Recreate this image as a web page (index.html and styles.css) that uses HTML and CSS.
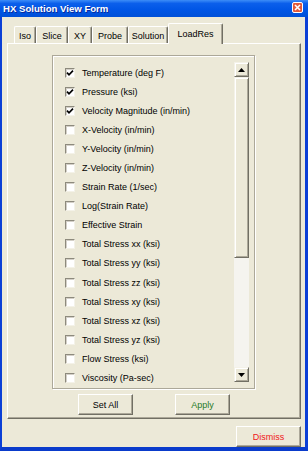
FILE: index.html
```html
<!DOCTYPE html>
<html>
<head>
<meta charset="utf-8">
<link rel="stylesheet" href="styles.css">
</head>
<body>
<div class="win">
  <div class="titlebar">
    <span class="title">HX Solution View Form</span>
    <svg class="close" width="11" height="11" viewBox="0 0 11 11">
      <rect x="0.5" y="0.5" width="10" height="10" rx="1.5" fill="#E2593A" stroke="#fff"/>
      <path d="M3 3 L8 8 M8 3 L3 8" stroke="#fff" stroke-width="1.6"/>
    </svg>
  </div>
  <div class="client">
    <div class="tabs">
      <div class="tab w-iso">Iso</div>
      <div class="tab w-slice">Slice</div>
      <div class="tab w-xy">XY</div>
      <div class="tab w-probe">Probe</div>
      <div class="tab w-sol">Solution</div>
      <div class="tab sel w-load">LoadRes</div>
    </div>
    <div class="panel">
      <div class="group">
        <div class="list">
          <div class="row"><span class="cb"><svg width="8" height="8" viewBox="0 0 8 8"><path d="M1 3.6 L3 5.8 L7 1.6" fill="none" stroke="#000" stroke-width="1.7"/></svg></span>Temperature (deg F)</div>
          <div class="row"><span class="cb"><svg width="8" height="8" viewBox="0 0 8 8"><path d="M1 3.6 L3 5.8 L7 1.6" fill="none" stroke="#000" stroke-width="1.7"/></svg></span>Pressure (ksi)</div>
          <div class="row"><span class="cb"><svg width="8" height="8" viewBox="0 0 8 8"><path d="M1 3.6 L3 5.8 L7 1.6" fill="none" stroke="#000" stroke-width="1.7"/></svg></span>Velocity Magnitude (in/min)</div>
          <div class="row"><span class="cb"></span>X-Velocity (in/min)</div>
          <div class="row"><span class="cb"></span>Y-Velocity (in/min)</div>
          <div class="row"><span class="cb"></span>Z-Velocity (in/min)</div>
          <div class="row"><span class="cb"></span>Strain Rate (1/sec)</div>
          <div class="row"><span class="cb"></span>Log(Strain Rate)</div>
          <div class="row"><span class="cb"></span>Effective Strain</div>
          <div class="row"><span class="cb"></span>Total Stress xx (ksi)</div>
          <div class="row"><span class="cb"></span>Total Stress yy (ksi)</div>
          <div class="row"><span class="cb"></span>Total Stress zz (ksi)</div>
          <div class="row"><span class="cb"></span>Total Stress xy (ksi)</div>
          <div class="row"><span class="cb"></span>Total Stress xz (ksi)</div>
          <div class="row"><span class="cb"></span>Total Stress yz (ksi)</div>
          <div class="row"><span class="cb"></span>Flow Stress (ksi)</div>
          <div class="row"><span class="cb"></span>Viscosity (Pa-sec)</div>
        </div>
        <div class="sb">
          <div class="sbbtn"><svg width="7" height="4" viewBox="0 0 7 4"><path d="M0 4 L3.5 0 L7 4 Z" fill="#000"/></svg></div>
          <div class="track"><div class="thumb"></div></div>
          <div class="sbbtn"><svg width="7" height="4" viewBox="0 0 7 4"><path d="M0 0 L3.5 4 L7 0 Z" fill="#000"/></svg></div>
        </div>
      </div>
      <div class="btnrow">
        <div class="btn">Set All</div>
        <div class="btn apply">Apply</div>
      </div>
    </div>
    <div class="footer">
      <div class="btn dismiss">Dismiss</div>
    </div>
  </div>
</div>
</body>
</html>
```
FILE: styles.css
```css
html, body {
  margin: 0;
  padding: 0;
  background: #ECE9D8;
}
.win {
  width: 308px;
  height: 451px;
  display: flex;
  flex-direction: column;
  font-family: "Liberation Sans", Arial, sans-serif;
  font-size: 9px;
  color: #000;
}
.titlebar {
  height: 17px;
  flex: none;
  display: flex;
  align-items: center;
  justify-content: space-between;
  background: linear-gradient(to bottom, #3D8DF7 0%, #0B5FEB 20%, #0055E5 60%, #0050D8 100%);
}
.title {
  padding-left: 3px;
  color: #fff;
  font-weight: bold;
  font-size: 9.6px;
  text-shadow: 1px 1px 0 #0A2A9A;
}
.close {
  margin-right: 5px;
  margin-top: -2px;
}
.client {
  flex: 1;
  background: #ECE9D8;
  border-left: 2px solid #0B3FD6;
  border-right: 3px solid #0B3FD6;
  border-bottom: 4px solid #0A3BCB;
  display: flex;
  flex-direction: column;
}
.tabs {
  margin-top: 6px;
  height: 20px;
  padding-left: 12px;
  display: flex;
  align-items: flex-end;
  position: relative;
  z-index: 2;
}
.tab {
  box-sizing: border-box;
  height: 17px;
  border-left: 1px solid #fff;
  border-top: 1px solid #fff;
  border-right: 1px solid #716F64;
  box-shadow: inset -1px 0 0 #ACA899;
  border-radius: 2px 2px 0 0;
  display: flex;
  align-items: center;
  justify-content: center;
  padding-top: 2px;
  background: #ECE9D8;
}
.tab.sel {
  height: 21px;
  margin-bottom: -1px;
  padding-top: 0;
}
.w-iso { width: 22px; }
.w-slice { width: 32px; }
.w-xy { width: 24px; }
.w-probe { width: 36px; }
.w-sol { width: 40px; }
.w-load { width: 55px; }
.panel {
  box-sizing: border-box;
  margin-left: 5px;
  width: 294px;
  height: 376px;
  border-left: 1px solid #fff;
  border-top: 1px solid #fff;
  border-right: 1px solid #716F64;
  border-bottom: 1px solid #716F64;
  box-shadow: inset -1px -1px 0 #ACA899;
  display: flex;
  flex-direction: column;
}
.group {
  box-sizing: border-box;
  margin-left: 44px;
  margin-top: 11px;
  width: 203px;
  height: 334px;
  border: 1px solid #ACA899;
  box-shadow: inset 1px 1px 0 #fff, 1px 1px 0 #fff;
  padding: 6px 5px 0 12px;
  display: flex;
}
.list {
  flex: 1;
  margin-top: 1px;
}
.row {
  height: 19.1px;
  display: flex;
  align-items: center;
  white-space: nowrap;
}
.cb {
  box-sizing: border-box;
  width: 10px;
  height: 10px;
  margin-right: 7px;
  background: #fff;
  border: 1px solid;
  border-color: #8D8A7D #F4F2E8 #F4F2E8 #8D8A7D;
  box-shadow: inset 1px 1px 0 #D4D0C8;
  display: flex;
  align-items: center;
  justify-content: center;
}
.cb svg {
  display: block;
}
.sb {
  width: 15px;
  height: 320px;
  display: flex;
  flex-direction: column;
  flex: none;
}
.sbbtn, .thumb {
  box-sizing: border-box;
  background: #ECE9D8;
  border-left: 1px solid #F4F2E8;
  border-top: 1px solid #F4F2E8;
  border-right: 1px solid #716F64;
  border-bottom: 1px solid #716F64;
  box-shadow: inset 1px 1px 0 #fff, inset -1px -1px 0 #ACA899;
}
.sbbtn {
  height: 15px;
  display: flex;
  align-items: center;
  justify-content: center;
}
.sbbtn svg {
  display: block;
}
.track {
  flex: 1;
  background: #F5F4EF;
}
.thumb {
  height: 181px;
}
.btnrow {
  display: flex;
  margin-top: 5px;
  padding-left: 70px;
  gap: 42px;
}
.btn {
  box-sizing: border-box;
  width: 55px;
  height: 21px;
  background: #ECE9D8;
  border-left: 1px solid #fff;
  border-top: 1px solid #fff;
  border-right: 1px solid #716F64;
  border-bottom: 1px solid #716F64;
  box-shadow: inset -1px -1px 0 #ACA899;
  display: flex;
  align-items: center;
  justify-content: center;
}
.apply {
  color: #1F7A1F;
}
.footer {
  display: flex;
  justify-content: flex-end;
  margin-top: 7px;
  padding-right: 4px;
}
.dismiss {
  width: 65px;
  color: #F01818;
}
```
